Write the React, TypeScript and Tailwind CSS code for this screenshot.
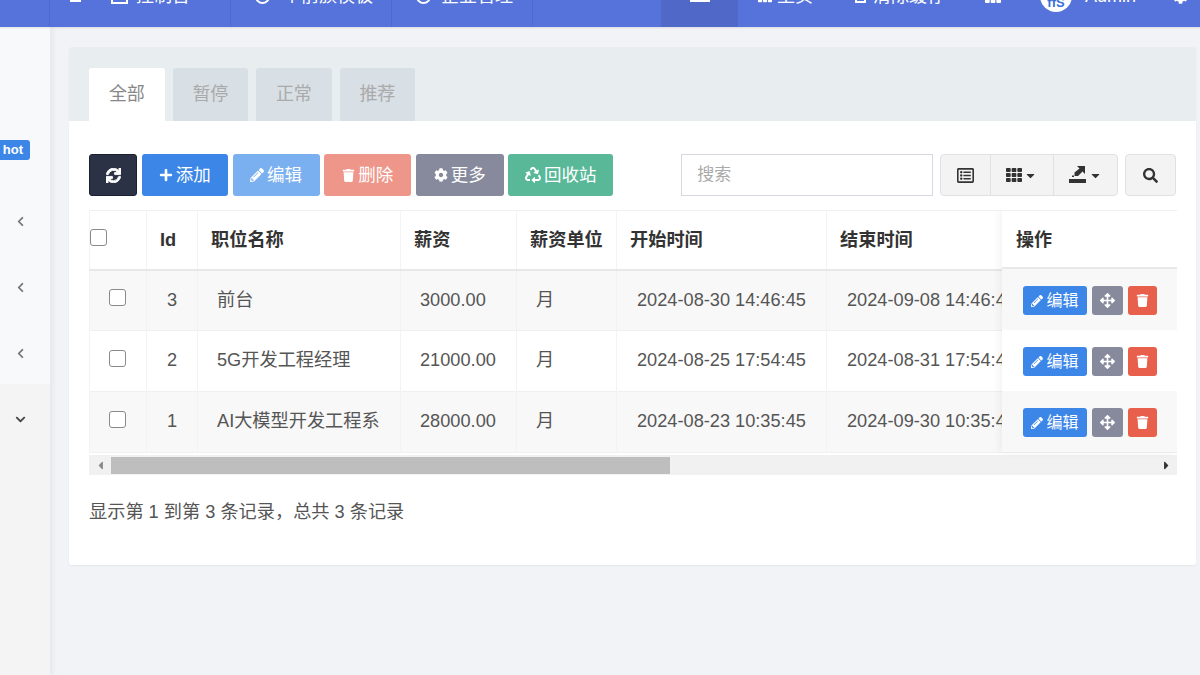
import { FaArrowsAlt, FaCog, FaPencilAlt, FaPlus, FaRecycle, FaRegListAlt, FaSearch, FaSync, FaTh, FaTrash } from 'react-icons/fa';
import { FaCaretDown, FaCaretLeft, FaCaretRight, FaChevronDown, FaChevronLeft } from 'react-icons/fa';
import type { ReactNode } from 'react';

const rows = [
  { id: 3, name: '前台', salary: '3000.00', unit: '月', start: '2024-08-30 14:46:45', end: '2024-09-08 14:46:45' },
  { id: 2, name: '5G开发工程经理', salary: '21000.00', unit: '月', start: '2024-08-25 17:54:45', end: '2024-08-31 17:54:45' },
  { id: 1, name: 'AI大模型开发工程系', salary: '28000.00', unit: '月', start: '2024-08-23 10:35:45', end: '2024-09-30 10:35:45' },
];

const tabs = ['全部', '暂停', '正常', '推荐'];

function ToolButton({ className, children }: { className: string; children: ReactNode }) {
  return (
    <button className={`flex h-[42px] items-center justify-center gap-[3px] rounded-[3px] text-[17.5px] text-white ${className}`}>
      {children}
    </button>
  );
}

function Checkbox() {
  return <span className="block h-[17px] w-[17px] rounded-[3px] border-[1.5px] border-[#8a8a8a] bg-white" />;
}

function ExportIcon() {
  return (
    <svg width="18" height="18" viewBox="0 0 18 18" fill="#333">
      <path d="M0 13h17v4H0z" />
      <path d="M8 0h8v8l-2.5-2.5L9 10H5.5V6.5l5-4z" />
      <path d="M3 9.5h2V11H3z" />
    </svg>
  );
}

export default function App() {
  return (
    <div className="h-[675px] w-[1200px] overflow-hidden bg-[#f1f3f6] font-['Liberation_Sans','Noto_Sans_CJK_SC',sans-serif] text-[#333]">
      <header className="relative flex h-[27px] items-end overflow-hidden bg-[#5573da] text-white shadow-[0_1px_2px_rgba(0,0,0,0.1)]">
        <div className="flex h-[62px] w-full shrink-0 text-[18px]">
          <div className="w-[50px] shrink-0 border-r border-[#4d69cc]" />
          <div className="flex w-[31px] shrink-0 items-center pl-[20px]"><span className="block h-[2px] w-[18px] translate-y-[5px] bg-white" /></div>
          <div className="flex w-[150px] shrink-0 items-center gap-[8px] border-r border-[#4d69cc] pl-[30px]">
            <span className="h-[16px] w-[17px] border-2 border-white" />控制台
          </div>
          <div className="flex w-[161px] shrink-0 items-center gap-[13px] border-r border-[#4d69cc] pl-[24px]">
            <span className="h-[15px] w-[15px] rounded-full border-2 border-white" />个前族模板
          </div>
          <div className="flex w-[141px] shrink-0 items-center gap-[10px] border-r border-[#4d69cc] pl-[24px]">
            <span className="h-[15px] w-[15px] rounded-full border-2 border-white" />企业管理
          </div>
          <div className="w-[128px] shrink-0" />
          <div className="flex w-[77px] shrink-0 items-center justify-center bg-[#5068c8]"><span className="block h-[2px] w-[20px] translate-y-[5px] bg-white" /></div>
          <div className="w-[20px] shrink-0" />
          <div className="flex w-[97px] shrink-0 items-center gap-[5px]">
            <FaTh className="h-[14px] w-[14px]" />主页
          </div>
          <div className="flex w-[130px] shrink-0 items-center gap-[7px]">
            <span className="h-[14px] w-[11px] border-2 border-white" />清除缓存
          </div>
          <div className="flex w-[55px] shrink-0 items-center"><FaTh className="h-[16px] w-[16px]" /></div>
          <div className="flex items-center">
            <span className="flex h-[32px] w-[32px] items-center justify-center rounded-full bg-white pt-[12px] text-[13px] leading-none font-bold text-[#3c6fd8]">ffS</span>
            <span className="ml-[13px] text-[18px]">Admin</span>
            <FaCog className="ml-[37px] h-[15px] w-[15px]" />
          </div>
        </div>
      </header>

      <div className="flex h-[648px]">
        <aside className="flex h-full w-[50px] shrink-0 flex-col bg-[#f8f9fb] shadow-[3px_0_6px_rgba(0,0,0,0.05)]">
          <div className="h-[357px] shrink-0">
            <div className="mt-[113px] flex h-[20px] w-[30px] items-center justify-end rounded-r-[3px] bg-[#3c86e8] pr-[7px] text-[13px] font-bold text-white">hot</div>
            <div className="mt-[56px] flex flex-col items-center gap-[55px] text-[#777]">
              <FaChevronLeft className="mr-[10px] h-[11px] w-[11px]" />
              <FaChevronLeft className="mr-[10px] h-[11px] w-[11px]" />
              <FaChevronLeft className="mr-[10px] h-[11px] w-[11px]" />
            </div>
          </div>
          <div className="flex flex-1 justify-center bg-[#f4f4f5] pt-[30px] text-[#444]">
            <FaChevronDown className="mr-[10px] h-[11px] w-[11px]" />
          </div>
        </aside>

        <main className="min-w-0 flex-1 pt-[20px] pr-[4px] pl-[19px]">
          <div className="h-[518px] overflow-hidden rounded-[3px] bg-white shadow-[0_1px_2px_rgba(0,0,0,0.05)]">
            <div className="flex h-[74px] items-end gap-[7.75px] bg-[#e8edf0] pl-[20px] text-[18px]">
              {tabs.map((tab, i) => (
                <div key={tab} className={`flex h-[53px] w-[75.75px] items-center justify-center rounded-t-[3px] ${i === 0 ? 'bg-white text-[#888]' : 'bg-[#d8dfe5] text-[#aaa]'}`}>{tab}</div>
              ))}
            </div>

            <div className="px-[20px] pt-[33px]">
              <div className="flex items-start">
                <div className="flex gap-[4.75px]">
                  <ToolButton className="w-[48px] border border-[#1c2030] bg-[#2c3245]"><FaSync className="h-[15px] w-[15px] stroke-[30px]" /></ToolButton>
                  <ToolButton className="w-[86px] bg-[#3c86e8]"><FaPlus className="h-[14px] w-[14px]" />添加</ToolButton>
                  <ToolButton className="w-[87px] bg-[#7aaff0]"><FaPencilAlt className="h-[14px] w-[14px]" />编辑</ToolButton>
                  <ToolButton className="w-[87px] bg-[#ee9689]"><FaTrash className="h-[13px] w-[13px]" />删除</ToolButton>
                  <ToolButton className="w-[87.5px] bg-[#868a9c]"><FaCog className="h-[14px] w-[14px]" />更多</ToolButton>
                  <ToolButton className="w-[105px] bg-[#58b898]"><FaRecycle className="h-[16px] w-[16px]" />回收站</ToolButton>
                </div>
                <div className="ml-[68px] flex h-[42px] w-[252px] items-center border border-[#d6d9e2] bg-white pl-[15px] text-[17px] text-[#aaa]">搜索</div>
                <div className="ml-[7px] flex h-[42px] w-[179px] overflow-hidden rounded-[4px] border border-[#dfe1e5] bg-[#f3f3f3] text-[#333]">
                  <div className="flex w-[50px] items-center justify-center border-r border-[#dfe1e5]"><FaRegListAlt className="h-[17px] w-[17px]" /></div>
                  <div className="flex w-[63px] items-center justify-center gap-[2px] border-r border-[#dfe1e5]"><FaTh className="h-[16px] w-[16px]" /><FaCaretDown className="h-[13px] w-[13px]" /></div>
                  <div className="flex flex-1 items-center justify-center gap-[2px]"><ExportIcon /><FaCaretDown className="h-[13px] w-[13px]" /></div>
                </div>
                <div className="ml-[7px] flex h-[42px] w-[51px] items-center justify-center rounded-[4px] border border-[#dfe1e5] bg-[#f3f3f3]"><FaSearch className="h-[15px] w-[15px]" /></div>
              </div>

              <div className="relative mt-[14px] w-[1088px] overflow-hidden">
                <table className="w-[1500px] table-fixed border-collapse text-[18.2px]">
                  <colgroup>
                    <col className="w-[57px]" />
                    <col className="w-[51px]" />
                    <col className="w-[203px]" />
                    <col className="w-[116px]" />
                    <col className="w-[100px]" />
                    <col className="w-[210px]" />
                    <col className="w-[210px]" />
                    <col />
                  </colgroup>
                  <thead>
                    <tr className="h-[59px] border-t border-b-2 border-[#f0f0f0] border-b-[#e8e8e8] text-left font-bold">
                      <th className="border-x border-[#f3f3f3] pb-[4px]"><Checkbox /></th>
                      <th className="border-r border-[#f3f3f3] pt-[2px] pl-[13px]">Id</th>
                      <th className="border-r border-[#f3f3f3] pt-[2px] pl-[13px]">职位名称</th>
                      <th className="border-r border-[#f3f3f3] pt-[2px] pl-[13px]">薪资</th>
                      <th className="border-r border-[#f3f3f3] pt-[2px] pl-[13px]">薪资单位</th>
                      <th className="border-r border-[#f3f3f3] pt-[2px] pl-[13px]">开始时间</th>
                      <th className="border-r border-[#f3f3f3] pt-[2px] pl-[13px]">结束时间</th>
                      <th />
                    </tr>
                  </thead>
                  <tbody className="text-[#555]">
                    {rows.map((row, i) => (
                      <tr key={row.id} className={`h-[61px] border-b border-[#f0f0f0] ${i % 2 === 0 ? 'bg-[#f8f8f8]' : 'bg-white'}`}>
                        <td className="border-x border-[#f3f3f3] pb-[5px] pl-[19px]"><Checkbox /></td>
                        <td className="border-r border-[#f3f3f3] pl-[20px]">{row.id}</td>
                        <td className="border-r border-[#f3f3f3] pl-[19px]">{row.name}</td>
                        <td className="border-r border-[#f3f3f3] pl-[19px]">{row.salary}</td>
                        <td className="border-r border-[#f3f3f3] pl-[19px]">{row.unit}</td>
                        <td className="border-r border-[#f3f3f3] pl-[20px]">{row.start}</td>
                        <td className="border-r border-[#f3f3f3] pl-[20px]">{row.end}</td>
                        <td />
                      </tr>
                    ))}
                  </tbody>
                </table>

                <div className="mt-[2px] flex h-[20px] items-center bg-[#f1f1f1]">
                  <div className="flex w-[22px] justify-center text-[#8a8a8a]"><FaCaretLeft className="h-[13px] w-[13px]" /></div>
                  <div className="h-[17px] w-[559px] bg-[#bebebe]" />
                  <div className="flex flex-1 justify-end pr-[4px] text-[#333]"><FaCaretRight className="h-[13px] w-[13px]" /></div>
                </div>

                <div className="absolute top-0 right-0 w-[175px] bg-white shadow-[-2px_0_8px_rgba(0,0,0,0.06)]">
                  <div className="flex h-[59px] items-center border-t border-b-2 border-[#f0f0f0] border-b-[#e8e8e8] pt-[3px] pl-[14px] text-[18px] font-bold">操作</div>
                  {rows.map((row, i) => (
                    <div key={row.id} className={`flex h-[61px] items-center gap-[5px] pt-[2px] pl-[21px] ${i % 2 === 0 ? 'bg-[#f8f8f8]' : 'bg-white'}`}>
                      <button className="flex h-[29px] w-[64px] items-center justify-center gap-[3px] rounded-[3px] bg-[#3c86e8] text-[16px] text-white"><FaPencilAlt className="h-[12px] w-[12px]" />编辑</button>
                      <button className="flex h-[29px] w-[31px] items-center justify-center rounded-[3px] bg-[#868a9c] text-white"><FaArrowsAlt className="h-[15px] w-[15px]" /></button>
                      <button className="flex h-[29px] w-[29px] items-center justify-center rounded-[3px] bg-[#e8604c] text-white"><FaTrash className="h-[13px] w-[13px]" /></button>
                    </div>
                  ))}
                </div>
              </div>

              <p className="mt-[24px] text-[18.2px] leading-[26px] text-[#555]">显示第 1 到第 3 条记录，总共 3 条记录</p>
            </div>
          </div>
        </main>
      </div>
    </div>
  );
}
